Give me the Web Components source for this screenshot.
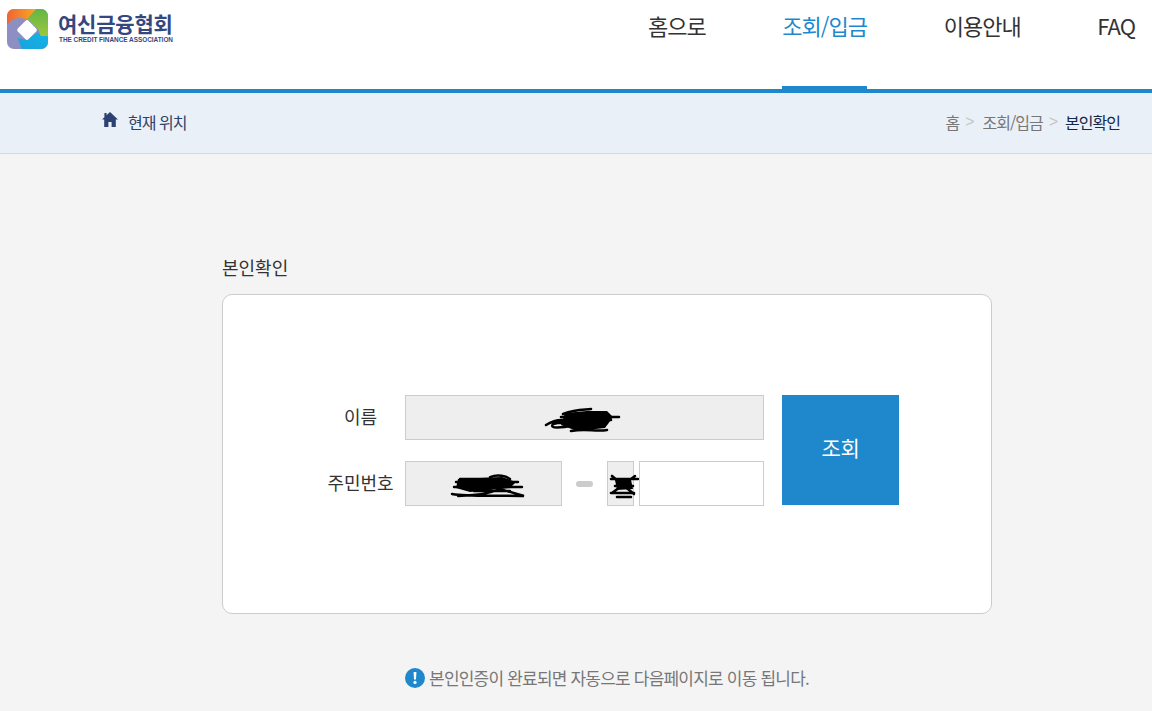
<!DOCTYPE html>
<html lang="ko">
<head>
<meta charset="utf-8">
<title>본인확인</title>
<style>
html, body { margin: 0; padding: 0; height: 100%; overflow: hidden; }
body { background: #f4f4f4; font-family: "Noto Sans CJK KR", "Noto Sans", sans-serif; }
</style>
</head>
<body>
<site-header>
  <nav-link>홈으로</nav-link>
  <nav-link active>조회/입금</nav-link>
  <nav-link>이용안내</nav-link>
  <nav-link>FAQ</nav-link>
</site-header>
<bread-bar></bread-bar>
<verify-panel></verify-panel>
<notice-line>본인인증이 완료되면 자동으로 다음페이지로 이동 됩니다.</notice-line>

<script>
class NavLink extends HTMLElement {
    constructor() {
        super();
        this.attachShadow({mode: 'open'});
        this.shadowRoot.innerHTML = `
            <style>
            :host {
                display: block;
                height: 89px;
                box-sizing: border-box;
                padding-top: 9px;
                font-size: 22px;
                line-height: 33px;
                letter-spacing: -1px;
                color: #333;
            }
            :host([active]) {
                color: #1f88cd;
                border-bottom: 3px solid #1f88cd;
            }
            </style>
            <slot></slot>
        `;
    }
}
customElements.define('nav-link', NavLink);

class SiteHeader extends HTMLElement {
    constructor() {
        super();
        this.attachShadow({mode: 'open'});
        this.shadowRoot.innerHTML = `
            <style>
            :host {
                display: flex;
                justify-content: space-between;
                height: 93px;
                box-sizing: border-box;
                background: #fff;
                border-bottom: 4px solid #1f88cd;
                padding: 0 17px 0 7px;
            }
            .logo { display: flex; align-items: flex-start; padding-top: 9px; }
            .logo svg { display: block; }
            .names { margin-left: 10px; padding-top: 1px; }
            .ko {
                font-size: 21px;
                line-height: 26px;
                font-weight: 700;
                letter-spacing: -0.2px;
                color: #34487f;
            }
            .en {
                font-size: 6.4px;
                line-height: 8px;
                font-weight: 700;
                font-family: "Liberation Sans", sans-serif;
                color: #34487f;
                white-space: nowrap;
                margin-left: 1px;
            }
            nav { display: flex; gap: 76.7px; }
            </style>
            <div class="logo">
                <svg width="41" height="40" viewBox="0 0 41 40">
                    <defs>
                        <clipPath id="r"><rect width="41" height="40" rx="7"/></clipPath>
                        <linearGradient id="o" x1="0" x2="1" y1="0.4" y2="0.4">
                            <stop offset="0" stop-color="#ee6436"/>
                            <stop offset="1" stop-color="#f9ae20"/>
                        </linearGradient>
                        <linearGradient id="g" x1="0" x2="0" y1="0" y2="1">
                            <stop offset="0" stop-color="#62b648"/>
                            <stop offset="1" stop-color="#a2c83a"/>
                        </linearGradient>
                        <linearGradient id="b" x1="1" x2="0" y1="0" y2="1">
                            <stop offset="0" stop-color="#12b4e8"/>
                            <stop offset="1" stop-color="#1aa2dc"/>
                        </linearGradient>
                    </defs>
                    <g clip-path="url(#r)">
                        <rect width="41" height="40" fill="#8d8fc2"/>
                        <path d="M0 0H31L21 11C13 7 5 9 0 16Z" fill="url(#o)"/>
                        <path d="M29 0H41V29H31C34 25 33 22 30 19L20 10Z" fill="url(#g)"/>
                        <path d="M41 27V40H15C13 36 12 33 11 29L20 31L31 23L34 27Z" fill="url(#b)"/>
                        <rect x="12.5" y="13.5" width="15" height="15" rx="2" transform="rotate(45 20 21)" fill="#fff"/>
                    </g>
                </svg>
                <div class="names">
                    <div class="ko">여신금융협회</div>
                    <div class="en">THE CREDIT FINANCE ASSOCIATION</div>
                </div>
            </div>
            <nav><slot></slot></nav>
        `;
    }
}
customElements.define('site-header', SiteHeader);

class BreadBar extends HTMLElement {
    constructor() {
        super();
        this.attachShadow({mode: 'open'});
        this.shadowRoot.innerHTML = `
            <style>
            :host {
                display: flex;
                align-items: center;
                justify-content: space-between;
                height: 61px;
                box-sizing: border-box;
                background: #eaf0f8;
                border-bottom: 1px solid #d3d9e2;
                padding: 0 32px 3px 102px;
                font-size: 16px;
                letter-spacing: -1px;
            }
            .here { display: flex; align-items: center; color: #2d4266; }
            .here svg { margin: -4px 10px 0 0; display: block; }
            .trail { display: flex; align-items: center; color: #777; }
            .sep { color: #c4c4c4; margin: 0 8px 0 6px; font-family: "Liberation Sans", sans-serif; letter-spacing: 0; }
            .sep.near { margin-right: 7px; }
            b { font-weight: 400; color: #14284a; }
            </style>
            <div class="here">
                <svg width="16" height="15" viewBox="0 0 16 15">
                    <path d="M8 0L16 7.6H13.8V15H9.6V10H6.4V15H2.2V7.6H0L2.4 5.3V1H4.6V3.2Z" fill="#2d4272"/>
                </svg>
                <span>현재 위치</span>
            </div>
            <div class="trail">
                <span>홈</span><span class="sep">&gt;</span>
                <span>조회/입금</span><span class="sep near">&gt;</span>
                <b>본인확인</b>
            </div>
        `;
    }
}
customElements.define('bread-bar', BreadBar);

class FormRow extends HTMLElement {
    constructor() {
        super();
        this.attachShadow({mode: 'open'});
        this.shadowRoot.innerHTML = `
            <style>
            :host {
                display: grid;
                grid-template-columns: 77px 359px;
                column-gap: 6px;
                align-items: center;
                height: 45px;
            }
            .label {
                font-size: 18px;
                color: #333;
                text-align: center;
                margin-top: -4px;
                white-space: nowrap;
            }
            .fields { display: flex; align-items: center; }
            </style>
            <div class="label"><slot name="label"></slot></div>
            <div class="fields"><slot></slot></div>
        `;
    }
}
customElements.define('form-row', FormRow);

class FieldBox extends HTMLElement {
    constructor() {
        super();
        this.attachShadow({mode: 'open'});
        this.shadowRoot.innerHTML = `
            <style>
            :host {
                display: block;
                position: relative;
                box-sizing: border-box;
                height: 45px;
                border: 1px solid #ccc;
                background: #eee;
                flex: none;
            }
            :host([empty]) { background: #fff; }
            ::slotted(svg) { position: absolute; overflow: visible; }
            </style>
            <slot></slot>
        `;
    }
}
customElements.define('field-box', FieldBox);

class VerifyPanel extends HTMLElement {
    constructor() {
        super();
        this.attachShadow({mode: 'open'});
        this.shadowRoot.innerHTML = `
            <style>
            :host {
                display: block;
                width: 770px;
                margin: 98px 0 0 222px;
            }
            h2 {
                margin: 0 0 12px;
                font-size: 18px;
                line-height: 30px;
                font-weight: 400;
                color: #333;
            }
            .card {
                box-sizing: border-box;
                height: 320px;
                background: #fff;
                border: 1px solid #ccc;
                border-radius: 10px;
                padding: 100px 0 0 99px;
                display: flex;
                gap: 18px;
                align-items: flex-start;
            }
            .rows { display: flex; flex-direction: column; gap: 21px; }
            .dash {
                width: 17px;
                height: 6px;
                border-radius: 3px;
                background: #ccc;
                margin: 0 14px;
                flex: none;
            }
            button {
                width: 117px;
                height: 110px;
                border: 0;
                background: #1f88cd;
                color: #fff;
                font: inherit;
                font-size: 21px;
                letter-spacing: -0.4px;
                padding: 0 0 6px;
            }
            </style>
            <h2>본인확인</h2>
            <div class="card">
                <div class="rows">
                    <form-row>
                        <span slot="label">이름</span>
                        <field-box style="width:359px">
                            <svg style="left:139px;top:9px" width="76" height="28" viewBox="0 0 76 28">
                                <path d="M1 20C12 13 30 14 8 19C4 24 16 23 30 20M18 9C32 4 40 5 46 4M16 12H74M20 15H66M14 18H62M22 21H58M26 26C42 23 50 27 62 25" fill="none" stroke="#000" stroke-width="2.6" stroke-linecap="round"/>
                                <path d="M20 8L42 6L62 6L68 12L60 23L32 26L16 20Z" fill="#000"/>
                            </svg>
                        </field-box>
                    </form-row>
                    <form-row>
                        <span slot="label">주민번호</span>
                        <field-box style="width:157px">
                            <svg style="left:44px;top:11px" width="76" height="26" viewBox="0 0 76 26">
                                <path d="M6 9H68M4 14H72M2 21C20 24 50 22 74 23L50 16C38 21 30 22 8 23M10 6H50M24 18H60M40 4C48 1 56 3 60 6" fill="none" stroke="#000" stroke-width="2.4" stroke-linecap="round"/>
                                <path d="M8 6L52 4L66 9L60 15L20 19L6 15Z" fill="#000"/>
                            </svg>
                        </field-box>
                        <span class="dash"></span>
                        <field-box style="width:27px">
                            <svg style="left:1px;top:11px" width="30" height="26" viewBox="0 0 30 26">
                                <path d="M3 3L25 21M26 3L3 20M2 6H29M2 20H25M6 13H24M8 24H22" fill="none" stroke="#000" stroke-width="2.6" stroke-linecap="round"/>
                                <path d="M6 7H22L24 16L8 17Z" fill="#000"/>
                            </svg>
                        </field-box>
                        <field-box empty style="width:125px;margin-left:5px"></field-box>
                    </form-row>
                </div>
                <button>조회</button>
            </div>
        `;
    }
}
customElements.define('verify-panel', VerifyPanel);

class NoticeLine extends HTMLElement {
    constructor() {
        super();
        this.attachShadow({mode: 'open'});
        this.shadowRoot.innerHTML = `
            <style>
            :host {
                display: flex;
                align-items: center;
                justify-content: center;
                width: 770px;
                margin: 49px 0 0 222px;
                height: 28px;
                font-size: 17px;
                letter-spacing: -0.8px;
                color: #777;
            }
            svg { margin: 2px 4px 0 0; flex: none; }
            </style>
            <svg width="20" height="20" viewBox="0 0 20 20">
                <circle cx="10" cy="10" r="10" fill="#1f88cd"/>
                <path d="M8.6 4H11.4L11 11.6H9Z" fill="#fff"/>
                <circle cx="10" cy="14.4" r="1.6" fill="#fff"/>
            </svg>
            <slot></slot>
        `;
    }
}
customElements.define('notice-line', NoticeLine);
</script>
</body>
</html>
